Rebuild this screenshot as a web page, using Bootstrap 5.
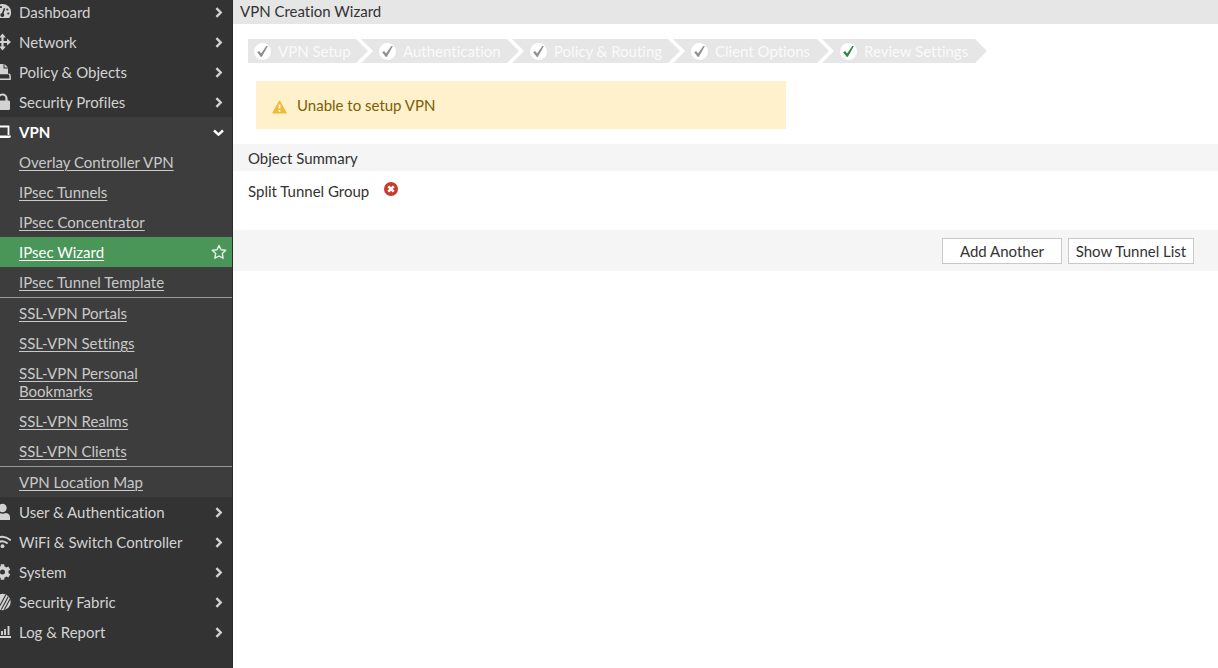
<!DOCTYPE html>
<html lang="en">
<head>
<meta charset="utf-8">
<title>VPN Creation Wizard</title>
<link href="https://cdn.jsdelivr.net/npm/bootstrap@5.3.0/dist/css/bootstrap.min.css" rel="stylesheet">
<style>
body{font-family:Lato,"Liberation Sans",sans-serif;font-size:15px;line-height:18px;font-variant-ligatures:none;color:#333;background:#fff;height:668px;overflow:hidden}
.side{width:233px;background:#333;border-right:1px solid #2b2b2b;overflow:hidden}
.item{height:30px;color:#d2d2d2;text-decoration:none;padding-right:8px}
.item.first{height:27px;padding-bottom:3px}
.item .ic{width:18px;height:18px;margin-left:-7px;margin-right:8px;flex:none}
.item .chev{width:11px;height:11px;flex:none}
.item.open{background:#3d3d3d;color:#fff;font-weight:700}
.sub{background:#3d3d3d}
.sub a{display:flex;justify-content:space-between;padding:6px 5px 6px 19px;color:#c9c9c9;text-decoration:underline;text-underline-offset:2px;text-decoration-thickness:1px}
.sub a.on{background:#4a9558;color:#fff}
.sub .cut{border-top:1px solid #999}
.title{height:24px;background:#e6e6e6;padding:2px 7px}
.steps{margin:15px 0 0 15px}
.step{height:24px;background:#e6e6e6;color:#fafafa;padding:0 0 0 18px;margin-left:-7px;white-space:nowrap;clip-path:polygon(0 0,calc(100% - 12px) 0,100% 50%,calc(100% - 12px) 100%,0 100%,12px 50%)}
.step:first-child{margin-left:0;padding-left:6px;clip-path:polygon(0 0,calc(100% - 12px) 0,100% 50%,calc(100% - 12px) 100%,0 100%)}
.step svg{width:17px;height:17px;margin:1px 7px 0 0;flex:none;color:#909090}
.step span{margin-top:-1px}
.step.now svg{color:#328345}
.w1{width:120px}.w2{width:158px}.w3{width:168px}.w4{width:156px}.w5{width:165px}
.warn{width:530px;height:48px;margin:18px 0 0 23px;padding:0 16px;background:#fef1cb;color:#7c6005}
.sect{height:27px;margin-top:15px;background:#f5f5f5;padding:5px 15px}
.result{height:59px;padding:11px 15px}
.foot{height:41px;background:#f5f5f5;padding-right:24px;gap:6px}
.foot .btn{height:26px;padding:0;border:1px solid #c9c9c9;border-radius:0;background:#fff;color:#333;font-size:15px;line-height:24px}
.b1{width:120px}.b2{width:126px}
</style>
</head>
<body>
<svg class="d-none">
<symbol id="r" viewBox="0 0 11 11"><path d="M3.400 1.200 7.700 5.500 3.400 9.800" fill="none" stroke="currentColor" stroke-width="2.4"/></symbol>
<symbol id="ok" viewBox="0 0 17 17"><circle cx="8.5" cy="8.5" r="8.5" fill="#fff"/><path d="M3.200 9.300 5.100 8l2 2.600L12.300 3l1.600.1-6 10.700-1 .1z" fill="currentColor"/></symbol>
</svg>
<div class="d-flex h-100">
<nav class="side flex-shrink-0">
  <a href="#" class="item first d-flex align-items-center"><svg class="ic" viewBox="0 0 18 18"><path d="M2.900 15A8.600 8.600 0 1 1 16.100 15z" fill="currentColor"/><path d="m9 12 2.600-6.800" stroke="#333" stroke-width="1.600"/><g fill="#333"><circle cx="9.300" cy="12" r="2"/><circle cx="8" cy="4" r="1.100"/><circle cx="4.500" cy="6.500" r="1.100"/><circle cx="14.300" cy="6.500" r="1.100"/><circle cx="15.300" cy="10.500" r="1.100"/></g></svg><span class="flex-grow-1">Dashboard</span><svg class="chev"><use href="#r"/></svg></a>
  <a href="#" class="item d-flex align-items-center"><svg class="ic" viewBox="0 0 18 18"><path d="M9.500 3v12M3 9h13" stroke="currentColor" stroke-width="2.200"/><path d="m9.500.5 3.400 4H6.100zM9.500 17.500l3.400-4H6.100zM1 9l4-3.400v6.800zM18 9l-4-3.400v6.800z" fill="currentColor"/></svg><span class="flex-grow-1">Network</span><svg class="chev"><use href="#r"/></svg></a>
  <a href="#" class="item d-flex align-items-center"><svg class="ic" viewBox="0 0 18 18"><path d="M3 1h7.500v4.500H15v5.800H3z" fill="currentColor"/><path d="M11.500 1 15 4.500h-3.500z" fill="currentColor"/><path d="M1.500 11v5.300h15.600v-3.500q0-1.800-1.600-1.800" fill="none" stroke="currentColor" stroke-width="1.500"/></svg><span class="flex-grow-1">Policy &amp; Objects</span><svg class="chev"><use href="#r"/></svg></a>
  <a href="#" class="item d-flex align-items-center"><svg class="ic" viewBox="0 0 18 18"><rect x="2" y="7.500" width="15" height="9.500" rx="1.200" fill="currentColor"/><path d="M5.500 8V5.500a4 4 0 0 1 8 0V8" fill="none" stroke="currentColor" stroke-width="2.200"/></svg><span class="flex-grow-1">Security Profiles</span><svg class="chev"><use href="#r"/></svg></a>
  <a href="#" class="item open d-flex align-items-center"><svg class="ic" viewBox="0 0 18 18"><path d="M3.500 12V3.500h12V12" fill="none" stroke="currentColor" stroke-width="1.800"/><path d="M0 12.500h18q0 2.500-2 2.500H2Q0 15 0 12.500z" fill="currentColor"/></svg><span class="flex-grow-1">VPN</span><svg class="chev" viewBox="0 0 11 11"><path d="M1 3.500 5.500 7.700 10 3.500" fill="none" stroke="currentColor" stroke-width="2.400"/></svg></a>
  <div class="sub">
    <a href="#">Overlay Controller VPN</a>
    <a href="#">IPsec Tunnels</a>
    <a href="#">IPsec Concentrator</a>
    <a href="#" class="on"><span>IPsec Wizard</span><svg width="16" height="18" viewBox="0 -1 16 18"><path d="m8 1.500 2 4.200 4.700.6-3.400 3.200.8 4.700L8 12l-4.100 2.200.8-4.700L1.300 6.300 6 5.700z" fill="none" stroke="#e6f5e9" stroke-width="1.400" stroke-linejoin="round"/></svg></a>
    <a href="#">IPsec Tunnel Template</a>
    <a href="#" class="cut">SSL-VPN Portals</a>
    <a href="#">SSL-VPN Settings</a>
    <a href="#"><span>SSL-VPN Personal<br>Bookmarks</span></a>
    <a href="#">SSL-VPN Realms</a>
    <a href="#">SSL-VPN Clients</a>
    <a href="#" class="cut">VPN Location Map</a>
  </div>
  <a href="#" class="item d-flex align-items-center"><svg class="ic" viewBox="0 0 18 18"><circle cx="9.500" cy="5" r="4.200" fill="currentColor"/><path d="M2 17v-2.500q0-4 4-4.500 3.500 1.500 7 0 4 .5 4 4.500V17z" fill="currentColor"/></svg><span class="flex-grow-1">User &amp; Authentication</span><svg class="chev"><use href="#r"/></svg></a>
  <a href="#" class="item d-flex align-items-center"><svg class="ic" viewBox="0 0 18 18"><g fill="none" stroke="currentColor" stroke-width="1.900"><path d="M.8 7.400q8.500-7.500 17 0"/><path d="M4 10.500q5.300-4.700 10.600 0"/></g><circle cx="9.500" cy="13.200" r="1.900" fill="currentColor"/></svg><span class="flex-grow-1">WiFi &amp; Switch Controller</span><svg class="chev"><use href="#r"/></svg></a>
  <a href="#" class="item d-flex align-items-center"><svg class="ic" viewBox="0 0 18 18"><circle cx="9.500" cy="9" r="4.300" fill="none" stroke="currentColor" stroke-width="3.600"/><path d="M9.500 1.200v3M9.500 13.800v3M2.700 5.100l2.600 1.500M13.700 11.400l2.600 1.500M2.700 12.900l2.600-1.500M13.700 6.600l2.600-1.500" stroke="currentColor" stroke-width="3.600"/></svg><span class="flex-grow-1">System</span><svg class="chev"><use href="#r"/></svg></a>
  <a href="#" class="item d-flex align-items-center"><svg class="ic" viewBox="0 0 18 18"><circle cx="9.500" cy="9" r="8.200" fill="currentColor"/><path d="M5 16 13 1.500M8.300 16.500 15.300 3.500M11.300 16.800 17 6" stroke="#333" stroke-width="1.100"/></svg><span class="flex-grow-1">Security Fabric</span><svg class="chev"><use href="#r"/></svg></a>
  <a href="#" class="item d-flex align-items-center"><svg class="ic" viewBox="0 0 18 18"><path d="M1 14h17" stroke="currentColor" stroke-width="2"/><path d="M6 7v5M9 8v4M12 6v6M15.500 3v9" stroke="currentColor" stroke-width="1.900"/></svg><span class="flex-grow-1">Log &amp; Report</span><svg class="chev"><use href="#r"/></svg></a>
</nav>
<main class="flex-grow-1">
  <div class="title">VPN Creation Wizard</div>
  <div class="steps d-flex">
    <div class="step w1 d-flex align-items-center"><svg><use href="#ok"/></svg><span>VPN Setup</span></div>
    <div class="step w2 d-flex align-items-center"><svg><use href="#ok"/></svg><span>Authentication</span></div>
    <div class="step w3 d-flex align-items-center"><svg><use href="#ok"/></svg><span>Policy &amp; Routing</span></div>
    <div class="step w4 d-flex align-items-center"><svg><use href="#ok"/></svg><span>Client Options</span></div>
    <div class="step w5 now d-flex align-items-center"><svg><use href="#ok"/></svg><span>Review Settings</span></div>
  </div>
  <div class="warn d-flex align-items-center"><svg class="mt-1" width="15" height="14" viewBox="0 0 15 14" style="margin-right:10px"><path d="M7.500.8 14.300 13H.7z" fill="#f0bb35" stroke="#f0bb35" stroke-linejoin="round"/><path d="M7.500 4.500v4M7.500 10v1.800" stroke="#fff" stroke-width="1.700"/></svg>Unable to setup VPN</div>
  <div class="sect">Object Summary</div>
  <div class="result d-flex align-items-start">Split Tunnel Group<svg style="margin-left:15px" width="14" height="14" viewBox="0 0 14 14"><circle cx="7" cy="7" r="7" fill="#c93a2d"/><path d="m4.300 4.300 5.400 5.400m0-5.400-5.400 5.400" stroke="#fff" stroke-width="2.600"/></svg></div>
  <div class="foot d-flex justify-content-end align-items-center">
    <button class="btn b1">Add Another</button>
    <button class="btn b2">Show Tunnel List</button>
  </div>
</main>
</div>
<script src="https://cdn.jsdelivr.net/npm/bootstrap@5.3.0/dist/js/bootstrap.bundle.min.js"></script>
</body>
</html>
